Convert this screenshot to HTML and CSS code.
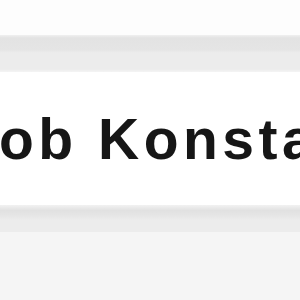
FILE: index.html
```html
<!DOCTYPE html>
<html>
<head>
<meta charset="utf-8">
<link rel="stylesheet" href="styles.css">
</head>
<body>
<div class="page">
  <div class="top"></div>
  <div class="band band-top"></div>
  <div class="row"><span class="name">ob Konstantin</span></div>
  <div class="band band-bottom"></div>
  <div class="rest"></div>
</div>
</body>
</html>
```
FILE: styles.css
```css
html, body {
  margin: 0;
  padding: 0;
  background: #f5f5f5;
}
.page {
  width: 300px;
  height: 300px;
  overflow: hidden;
  display: flex;
  flex-direction: column;
}
.top {
  height: 35px;
  background: #fdfdfd;
}
.band {
  flex: none;
}
.band-top {
  height: 37px;
  background: linear-gradient(#f0f0f0 0, #e3e3e3 8%, #e5e5e5 40%, #ececec 48%, #ececec 92%, #f4f4f4 100%);
}
.row {
  height: 133px;
  box-sizing: border-box;
  background: #ffffff;
  padding-top: 34px;
  white-space: nowrap;
  overflow: hidden;
}
.name {
  font-family: "Liberation Sans", Arial, sans-serif;
  font-size: 57px;
  font-weight: bold;
  letter-spacing: 4.5px;
  line-height: normal;
  color: #161616;
  display: block;
  margin-left: -1px;
  filter: blur(0.6px);
}
.band-bottom {
  height: 27px;
  background: linear-gradient(#f2f2f2 0, #e1e1e1 20%, #e6e6e6 40%, #ececec 55%, #ececec 100%);
}
.rest {
  flex: 1;
  background: #f5f5f5;
}
```
